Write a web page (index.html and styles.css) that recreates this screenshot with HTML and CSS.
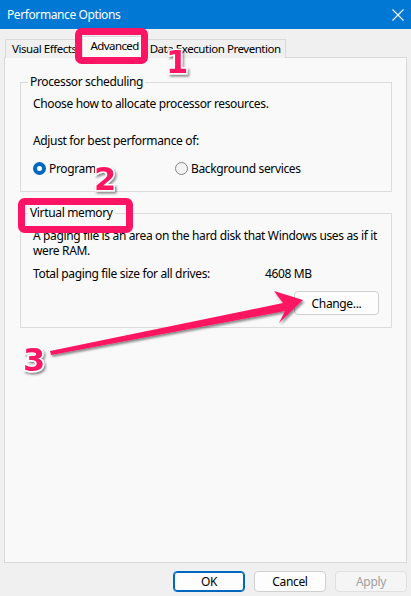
FILE: index.html
```html
<!DOCTYPE html>
<html lang="en">
  <head>
    <meta charset="UTF-8" />
    <title>Performance Options</title>
    <link rel="stylesheet" href="styles.css">
  </head>
  <body>
    <div class="window">
      <!-- title bar -->
      <div class="titlebar">
        <span class="title">Performance Options</span>
        <svg class="close" width="12" height="12" viewBox="0 0 12 12">
          <path d="M0.5 0.5 L11.5 11.5 M11.5 0.5 L0.5 11.5" stroke="#fff" stroke-width="1.1" fill="none" />
        </svg>
      </div>

      <div class="content">
        <!-- tabs -->
        <ul class="tabs">
          <li class="tab tab_ve">Visual Effects</li>
          <li class="tab tab_adv on">Advanced</li>
          <li class="tab tab_dep">Data Execution Prevention</li>
        </ul>

        <div class="panel">
          <fieldset class="group proc">
            <legend>Processor scheduling</legend>
            <p class="line choose">Choose how to allocate processor resources.</p>
            <p class="line adjust">Adjust for best performance of:</p>
            <div class="radios">
              <label class="radio prog"><span class="dot checked"></span>Program</label>
              <label class="radio bg"><span class="dot"></span>Background services</label>
            </div>
          </fieldset>

          <fieldset class="group vm">
            <legend>Virtual memory</legend>
            <p class="line paging">A paging file is an area on the hard disk that Windows uses as if it were RAM.</p>
            <div class="total">
              <span class="total_label">Total paging file size for all drives:</span>
              <span class="total_value">4608 MB</span>
            </div>
            <div class="change_row">
              <button class="btn change">Change...</button>
            </div>
          </fieldset>
        </div>

        <!-- bottom buttons -->
        <div class="footer">
          <button class="btn ok">OK</button>
          <button class="btn">Cancel</button>
          <button class="btn disabled">Apply</button>
        </div>
      </div>

      <!-- annotations on top of the dialog -->
      <svg class="marks" width="411" height="596" viewBox="0 0 411 596">
        <defs>
          <filter id="shadow" x="-30%" y="-30%" width="160%" height="160%">
            <feDropShadow dx="1.5" dy="2" stdDeviation="1.2" flood-color="#000" flood-opacity="0.45" />
          </filter>
        </defs>
        <rect x="78.5" y="31.5" width="66" height="29" rx="3" fill="none" stroke="#fe1464" stroke-width="7" />
        <rect x="21.5" y="201.5" width="108" height="28" rx="3" fill="none" stroke="#fe1464" stroke-width="7" />
        <polygon points="50,351 283,303 274,291 303,300 279,323 285,311 51,355" fill="#fe1464" filter="url(#shadow)" />
        <g class="nums" filter="url(#shadow)">
          <text x="166" y="73">1</text>
          <text x="94" y="190">2</text>
          <text x="23" y="371">3</text>
        </g>
      </svg>
    </div>
  </body>
</html>
```

FILE: styles.css
```css
* {
  box-sizing: border-box;
  margin: 0;
  padding: 0;
  list-style: none;
}
body {
  width: 411px;
  height: 596px;
  overflow: hidden;
  background-color: #f0f0f0;
  font-family: "Noto Sans", "Open Sans", sans-serif;
  font-size: 12px;
  letter-spacing: -0.35px;
  color: #000;
}
.window {
  position: relative;
  width: 411px;
  height: 596px;
  display: flex;
  flex-direction: column;
}
.titlebar {
  height: 29px;
  background-color: #0078d4;
  color: #fff;
  display: flex;
  align-items: center;
  justify-content: space-between;
  padding: 0 7px 0 7px;
}
.title {
  font-size: 12px;
  letter-spacing: -0.4px;
}
.close {
  display: block;
}
.content {
  flex: 1;
  display: flex;
  flex-direction: column;
  padding: 0 4px;
}
.tabs {
  display: flex;
  align-items: flex-end;
  height: 28px;
  padding-left: 1px;
}
.tab {
  height: 19px;
  line-height: 17px;
  padding: 0 7px 0 6px;
  border: 1px solid #d9d9d9;
  border-bottom: none;
  background-color: #f0f0f0;
  margin-bottom: -1px;
  position: relative;
  z-index: 1;
  font-size: 11.5px;
  letter-spacing: -0.45px;
}
.tab_ve {
  border-right: none;
}
.tab_dep {
  border-left: none;
  padding: 0 4px 0 5px;
}
.tab.on {
  height: 22px;
  line-height: 18px;
  margin: 0 -2px -1px;
  padding: 0 7px 0 8px;
  background-color: #f9f9f9;
  letter-spacing: -0.6px;
  z-index: 2;
}
.panel {
  height: 506px;
  border: 1px solid #d9d9d9;
  background-color: #f9f9f9;
  padding: 16px 14px 0 15px;
}
.group {
  border: 1px solid #dcdcdc;
  padding: 0 8px 0 12px;
}
.group legend {
  margin-left: -5px;
  padding: 0 2px;
  line-height: 16px;
}
.line {
  line-height: 15px;
}
.choose {
  margin-top: 6px;
}
.adjust {
  margin-top: 22px;
}
.radios {
  display: flex;
  margin-top: 13px;
  height: 15px;
  margin-bottom: 15px;
}
.radio {
  display: flex;
  align-items: center;
  line-height: 15px;
}
.prog {
  width: 142px;
}
.dot {
  width: 13px;
  height: 13px;
  border-radius: 50%;
  border: 1px solid #858585;
  background-color: #f3f3f3;
  margin-right: 3px;
}
.dot.checked {
  border: 4px solid #0067c0;
  background-color: #fff;
}
.vm {
  margin-top: 13px;
}
.paging {
  margin-top: 7px;
}
.total {
  display: flex;
  margin-top: 8px;
  line-height: 15px;
}
.total_label {
  width: 232px;
}
.change_row {
  display: flex;
  justify-content: flex-end;
  margin-top: 10px;
  margin-bottom: 12px;
  padding-right: 4px;
}
.btn {
  font-family: "Noto Sans", "Open Sans", sans-serif;
  font-size: 12px;
  letter-spacing: -0.35px;
  color: #000;
  background-color: #fdfdfd;
  border: 1px solid #d0d0d0;
  border-radius: 4px;
  line-height: 15px;
}
.change {
  width: 85px;
  height: 24px;
}
.footer {
  display: flex;
  justify-content: flex-end;
  gap: 9px;
  padding-top: 8px;
}
.footer .btn {
  width: 72px;
  height: 21px;
}
.ok {
  border: 1px solid #0067c0;
  box-shadow: inset 0 0 0 1px #0067c0;
}
.btn.disabled {
  color: #a0a0a0;
  border-color: #e0e0e0;
  background-color: #f5f5f5;
}
.marks {
  position: absolute;
  left: 0;
  top: 0;
  z-index: 5;
  pointer-events: none;
}
.nums text {
  font-family: "DejaVu Sans", sans-serif;
  font-weight: bold;
  font-size: 32px;
  letter-spacing: 0;
  fill: #fe1464;
  stroke: #fff;
  stroke-width: 3px;
  paint-order: stroke;
}
```
